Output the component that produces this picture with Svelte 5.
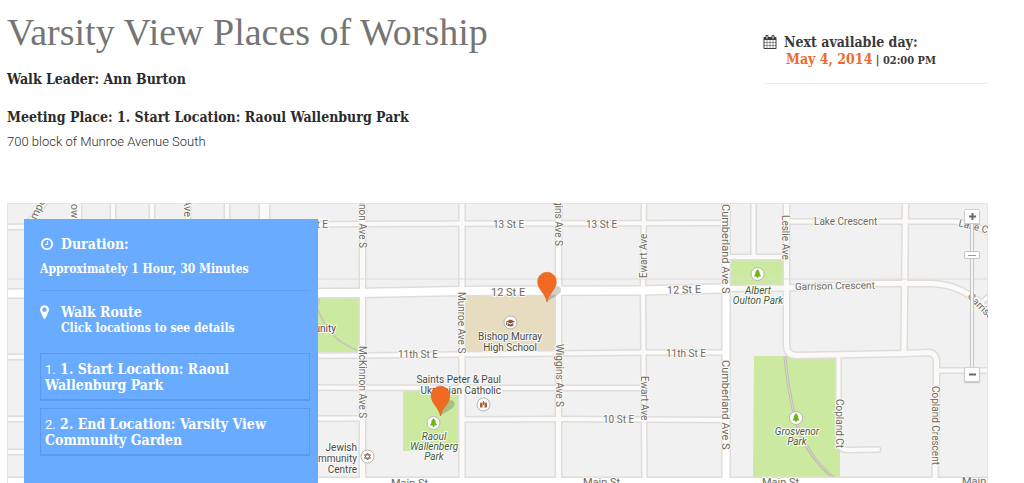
<script>
  let zoom = $state(80);
  let selected = $state(null);

  const stops = [
    '1. Start Location: Raoul Wallenburg Park',
    '2. End Location: Varsity View Community Garden'
  ];

  // [path, width]
  const roads = [
    ['M7 227L360 224L726 223', 4],
    ['M7 357L362 355.5L559 353.5L643 352.5L726 352.5', 4],
    ['M300 387.5L462 388H643', 4],
    ['M7 419L362 418.5', 4],
    ['M7 452H30', 4],
    ['M462 419.5L559 419L726 420', 4],
    ['M26 226L47 200', 4],
    ['M79 200V230', 4],
    ['M113 200V230', 4],
    ['M152 200V230', 4],
    ['M188 200V230', 4],
    ['M227 200V230', 4],
    ['M264.5 200V230', 9],
    ['M362.5 200V484', 5],
    ['M462 200V484', 5],
    ['M558.5 200V484', 5],
    ['M644 200L643 290L644.5 484', 4],
    ['M753.5 200V257', 4],
    ['M726 257H786', 4],
    ['M786 221.5H955Q974 223 992 235', 4],
    ['M726 288.5L786 288L876 283.5H930C952 284 970 291 992 314', 5],
    ['M981 303L992 293', 3],
    ['M905.5 200L904 353', 5],
    ['M786.5 200V345Q786.5 355.5 797 355.5L905 353.5L928 352.5Q936 352.5 936.5 362V378L935 484', 5],
    ['M937 370.5H990', 4],
    ['M838.5 356V440Q838.5 450 848 450L878 449.5', 4]
  ];

  const mainRoads = [
    ['M4 293.5L360 293L460 291L640 290.5L722 288.5', 8],
    ['M726 200V484', 7],
    ['M4 484H992', 12]
  ];

  // [text, x, y, rotation, anchor, size]
  const streets = [
    ['Temperance St', 31, 231, -64, 'start', 11],
    ['Lansdowne Ave', 71, 251, 90, 'end', 11],
    ['Clarence Ave', 184, 217, 90, 'end', 11],
    ['13 St E', 328, 228, 0, 'end', 10],
    ['McKinnon Ave S', 359, 248, 90, 'end', 10],
    ['McKinnon Ave S', 359, 346, 90, 'start', 10],
    ['Munroe Ave S', 458, 292, 90, 'start', 10],
    ['Wiggins Ave S', 555, 246, 90, 'end', 10],
    ['Wiggins Ave S', 556, 344, 90, 'start', 10],
    ['Ewart Ave', 647, 278, -90, 'start', 10],
    ['Ewart Ave', 641, 376, 90, 'start', 10],
    ['Cumberland Ave S', 722, 204, 90, 'start', 11],
    ['Cumberland Ave S', 722, 360, 90, 'start', 11],
    ['Leslie Ave', 782, 215, 90, 'start', 10],
    ['Copland Ct', 836, 399, 90, 'start', 10],
    ['Copland Crescent', 932, 386, 90, 'start', 10],
    ['13 St E', 493, 228, 0, 'start', 10],
    ['13 St E', 586, 228, 0, 'start', 10],
    ['12 St E', 491, 296, 0, 'start', 11],
    ['12 St E', 667, 294, -2, 'start', 11],
    ['11th St E', 398, 358, 0, 'start', 10],
    ['11th St E', 666, 357, 0, 'start', 10],
    ['10 St E', 603, 423, 0, 'start', 10],
    ['Main St', 391, 487, 0, 'start', 11],
    ['Main St', 583, 486, 0, 'start', 11],
    ['Main St', 762, 486, 0, 'start', 11],
    ['Main St', 962, 485, 0, 'start', 11],
    ['Lake Crescent', 814, 225, 0, 'start', 10],
    ['Lake Crescent', 958, 226, 14, 'start', 10],
    ['Garrison Crescent', 795, 290, -1, 'start', 10],
    ['Garrison Crescent', 967, 297, 45, 'start', 10]
  ];

  // [lines, x, first baseline, anchor, kind]
  const places = [
    [['Community'], 336, 332, 'end', 'poi'],
    [['Jewish', 'Community', 'Centre'], 357, 451, 'end', 'poi'],
    [['Saints Peter & Paul', 'Ukrainian Catholic'], 501, 383, 'end', 'poi'],
    [['Bishop Murray', 'High School'], 510, 340, 'middle', 'poi'],
    [['Raoul', 'Wallenberg', 'Park'], 434, 440, 'middle', 'park'],
    [['Albert', 'Oulton Park'], 758, 294, 'middle', 'park'],
    [['Grosvenor', 'Park'], 797, 435, 'middle', 'park']
  ];

  const trees = [[433.5, 423], [757.5, 274], [796, 418]];
  const pins = [[547, 302], [440.5, 416]];

  const clock = 'M1024 544v448q0 14-9 23t-23 9h-320q-14 0-23-9t-9-23v-64q0-14 9-23t23-9h224v-352q0-14 9-23t23-9h64q14 0 23 9t9 23zm416 352q0-148-73-273t-198-198-273-73-273 73-198 198-73 273 73 273 198 198 273 73 273-73 198-198 73-273zm224 0q0 209-103 385.5t-279.5 279.5-385.5 103-385.5-103-279.5-279.5-103-385.5 103-385.5 279.5-279.5 385.5-103 385.5 103 279.5 279.5 103 385.5z';
  const marker = 'M1152 640q0-106-75-181t-181-75-181 75-75 181 75 181 181 75 181-75 75-181zm256 0q0 109-33 179l-364 774q-16 33-47.5 52t-67.5 19-67.5-19-46.5-52l-365-774q-33-70-33-179 0-212 150-362t362-150 362 150 150 362z';
  const calendar = 'M192 1664h288v-288h-288v288zm352 0h320v-288h-320v288zm-352-352h288v-320h-288v320zm352 0h320v-320h-320v320zm-352-384h288v-288h-288v288zm736 736h320v-288h-320v288zm-384-736h320v-288h-320v288zm768 736h288v-288h-288v288zm-384-352h320v-320h-320v320zm-352-864v-288q0-13-9.5-22.5t-22.5-9.5h-64q-13 0-22.5 9.5t-9.5 22.5v288q0 13 9.5 22.5t22.5 9.5h64q13 0 22.5-9.5t9.5-22.5zm736 864h288v-320h-288v320zm-384-384h320v-288h-320v288zm384 0h288v-288h-288v288zm32-480v-288q0-13-9.5-22.5t-22.5-9.5h-64q-13 0-22.5 9.5t-9.5 22.5v288q0 13 9.5 22.5t22.5 9.5h64q13 0 22.5-9.5t9.5-22.5zm384-64v1280q0 52-38 90t-90 38h-1408q-52 0-90-38t-38-90v-1280q0-52 38-90t90-38h128v-96q0-66 47-113t113-47h64q66 0 113 47t47 113v96h384v-96q0-66 47-113t113-47h64q66 0 113 47t47 113v96h128q52 0 90 38t38 90z';
</script>

<main class="page">
  <header class="intro">
    <div class="summary">
      <h1>Varsity View Places of Worship</h1>
      <h2>Walk Leader: Ann Burton</h2>
      <h2>Meeting Place: 1. Start Location: Raoul Wallenburg Park</h2>
      <p>700 block of Munroe Avenue South</p>
    </div>
    <aside class="next-day">
      <svg class="icon" viewBox="0 0 1792 1792" aria-hidden="true"><path d={calendar} /></svg>
      <div>
        <h3>Next available day:</h3>
        <p class="when"><span class="date">May 4, 2014</span> | 02:00 PM</p>
      </div>
    </aside>
  </header>

  <section class="map" aria-label="Walk map">
    <svg class="canvas" viewBox="7 203 981 280" preserveAspectRatio="xMinYMin slice">
      <rect x="7" y="203" width="981" height="280" fill="#f1f1f1" />

      <rect x="300" y="297" width="60" height="55" fill="#cbea9f" />
      <path d="M320 297L317 308Q328 334 343 343T360 350" fill="none" stroke="#c8c8b8" stroke-width="2" />
      <rect x="403" y="391" width="55" height="60" fill="#cbea9f" />
      <rect x="730" y="260" width="54" height="26" fill="#cbea9f" />
      <path d="M754 356H840V477H753Z" fill="#cbea9f" />
      <path d="M785 356Q787 384 795 418Q805 455 835 479" fill="none" stroke="#bdbdb0" stroke-width="3" />
      <path d="M785 356Q787 384 795 418Q805 455 835 479" fill="none" stroke="#dcdcd2" stroke-width="1" />
      <rect x="464" y="295" width="92" height="56" fill="#e7dcbf" />

      <g fill="none" stroke="#dedddb">
        {#each [...roads, ...mainRoads] as [d, width]}
          <path {d} stroke-width={width + 3} stroke-linecap="round" />
        {/each}
      </g>
      <g fill="none" stroke="#fbfaf8">
        {#each roads as [d, width]}
          <path {d} stroke-width={width} stroke-linecap="round" />
        {/each}
      </g>
      <g fill="none" stroke="#ffffff">
        {#each mainRoads as [d, width]}
          <path {d} stroke-width={width} />
        {/each}
      </g>
      <path d="M7 279H988" stroke="#dcdbd7" stroke-width="1" />
      <path d="M7.5 483V203.5H987.5V483" fill="none" stroke="#e4e4e4" />

      <g class="street">
        {#each streets as [text, x, y, angle, anchor, size]}
          <text font-size={size} text-anchor={anchor} transform="translate({x} {y}) rotate({angle})">{text}</text>
        {/each}
      </g>

      {#each places as [lines, x, y, anchor, kind]}
        <text class={kind} text-anchor={anchor}>
          {#each lines as line, i}
            <tspan {x} y={y + i * (kind === 'poi' ? 11 : 10)}>{line}</tspan>
          {/each}
        </text>
      {/each}

      <g fill="#fff" stroke="#b5b5b5">
        {#each trees as [x, y]}
          <circle cx={x} cy={y} r="6.5" />
        {/each}
        <circle cx="510.5" cy="322.5" r="6.5" />
        <circle cx="483.5" cy="404.5" r="6.5" />
        <circle cx="367.5" cy="456.5" r="6.5" />
      </g>
      {#each trees as [x, y]}
        <path transform="translate({x} {y})" d="M0 -5L2.5 -1.5H1.7L3.5 2.5H0.8V4H-0.8V2.5H-3.5L-1.7 -1.5H-2.5Z" fill="#6fb510" />
      {/each}
      <path d="M506 321.5L510.5 319.5L515 321.5L510.5 323.5ZM507.5 323V325.5Q510.5 327.5 513.5 325.5V323L510.5 324.5ZM506.2 322V325H507V322Z" fill="#8a5a3c" />
      <path d="M480 407.5V403.5L481 402L482 403.5V407.5ZM482.4 407.5V402.5L483.5 400.5L484.6 402.5V407.5H484V405H483V407.5ZM485 407.5V403.5L486 402L487 403.5V407.5Z" fill="#a8613a" />
      <path d="M367.5 453L370.5 458.2H364.5ZM367.5 460L364.5 454.8H370.5Z" fill="none" stroke="#8a6a55" />

      {#each pins as [x, y]}
        <g transform="translate({x} {y})">
          <path d="M0 0C3 -6 2 -11 7 -15C11 -17 15 -15 14 -11C13 -7 6 -5 0 0Z" fill="#000" opacity="0.18" />
          <path d="M0 0C-1.5 -9 -9.3 -12 -9.3 -20.5A9.3 9.3 0 0 1 9.3 -20.5C9.3 -12 1.5 -9 0 0Z" fill="#f26a21" stroke="#d95a17" stroke-width="0.6" />
        </g>
      {/each}
    </svg>

    <div class="panel">
      <div class="row">
        <svg class="icon" viewBox="0 0 1792 1792" aria-hidden="true"><path d={clock} /></svg>
        <h3>Duration:</h3>
      </div>
      <p class="length">Approximately 1 Hour, 30 Minutes</p>
      <div class="row route">
        <svg class="icon marker" viewBox="384 0 1024 1792" aria-hidden="true"><path d={marker} /></svg>
        <div>
          <h3>Walk Route</h3>
          <p class="hint">Click locations to see details</p>
        </div>
      </div>
      <ol>
        {#each stops as stop, i}
          <li>
            <button class:active={selected === i} onclick={() => (selected = i)}>
              <span class="number">{i + 1}.</span> {stop}
            </button>
          </li>
        {/each}
      </ol>
    </div>

    <div class="zoom">
      <button aria-label="Zoom in" onclick={() => (zoom = Math.min(100, zoom + 5))}>
        <svg viewBox="0 0 9 9" aria-hidden="true"><path d="M1 4.5H8M4.5 1V8" /></svg>
      </button>
      <input type="range" min="0" max="100" bind:value={zoom} aria-label="Zoom level" />
      <button aria-label="Zoom out" onclick={() => (zoom = Math.max(0, zoom - 5))}>
        <svg viewBox="0 0 9 9" aria-hidden="true"><path d="M1 4.5H8" /></svg>
      </button>
    </div>
  </section>
</main>

<style>
  :global(body) {
    margin: 0;
    background: #fff;
  }

  .page {
    padding: 0 36px 0 7px;
    color: #2b2b2b;
    font-family: 'DejaVu Serif Condensed', 'DejaVu Serif', serif;
  }

  h1, h2, h3, p, ol {
    margin: 0;
    padding: 0;
  }

  .intro {
    display: flex;
    justify-content: space-between;
    align-items: flex-start;
    min-height: 203px;
  }

  h1 {
    padding-top: 8px;
    margin-bottom: 12px;
    font-family: 'Liberation Serif', serif;
    font-size: 38px;
    font-weight: 400;
    line-height: 48px;
    color: #757575;
  }

  h2 {
    margin-bottom: 16px;
    font-size: 14px;
    line-height: 22px;
  }

  .summary p {
    margin-top: -14px;
    font-family: Roboto, sans-serif;
    font-size: 13px;
    font-weight: 300;
    line-height: 24px;
  }

  .next-day {
    display: flex;
    gap: 7px;
    width: 225px;
    margin-top: 34px;
    padding-bottom: 14px;
    border-bottom: 1px solid #ececec;
    box-sizing: border-box;
    color: #3a3a3a;
  }

  .icon {
    flex: none;
    width: 14px;
    height: 16px;
    fill: currentColor;
  }

  h3 {
    font-size: 14px;
    line-height: 17px;
  }

  .when {
    padding-left: 2px;
    font-size: 11px;
    font-weight: 700;
    line-height: 17px;
  }

  .date {
    font-size: 14px;
    color: #f26a2b;
  }

  .map {
    position: relative;
    display: grid;
    height: 280px;
    overflow: hidden;
  }

  .canvas,
  .panel {
    grid-area: 1 / 1;
  }

  .canvas {
    width: 100%;
    height: 280px;
    font-family: Roboto, sans-serif;
  }

  .canvas text {
    paint-order: stroke;
    stroke: #fbfaf8;
    stroke-width: 2px;
    stroke-linejoin: round;
  }

  .street {
    fill: #6f6a5e;
  }

  .poi {
    font-size: 10px;
    fill: #4a4a45;
  }

  .park {
    font-size: 10px;
    font-style: italic;
    fill: #3f5f38;
  }

  .panel {
    position: relative;
    width: 294px;
    margin: 16px 0 0 17px;
    padding: 17px 8px 0 16px;
    box-sizing: border-box;
    background: #69abfe;
    color: #fff;
  }

  .row {
    display: flex;
    gap: 7px;
  }

  .length {
    padding: 8px 0 13px;
    border-bottom: 1px solid #629fee;
    font-size: 12px;
    font-weight: 700;
    line-height: 16px;
  }

  .route {
    margin: 13px 0 18px;
  }

  .icon.marker {
    width: 9px;
    margin-right: 5px;
  }

  .hint {
    font-size: 12px;
    font-weight: 700;
    line-height: 14px;
  }

  ol {
    list-style: none;
  }

  li {
    margin-bottom: 7px;
  }

  .panel button {
    display: block;
    width: 100%;
    padding: 7px 24px 6px 4px;
    border: 1px solid #5f9ae8;
    border-bottom-width: 2px;
    background: none;
    color: inherit;
    font: 700 14px/16px 'DejaVu Serif Condensed', 'DejaVu Serif', serif;
    text-align: left;
    cursor: pointer;
  }

  .panel button.active {
    background: #5f9ff0;
  }

  .number {
    font-family: Roboto, sans-serif;
    font-size: 13px;
    font-weight: 400;
    line-height: 1;
  }

  .zoom {
    position: absolute;
    top: 6px;
    right: 8px;
    display: flex;
    flex-direction: column;
    align-items: center;
    width: 16px;
  }

  .zoom button {
    display: grid;
    place-items: center;
    width: 16px;
    height: 15px;
    padding: 0;
    border: 1px solid #cfcfcf;
    border-radius: 2px;
    background: #fff;
    box-shadow: 0 1px 1px rgba(0, 0, 0, 0.2);
    cursor: pointer;
  }

  .zoom button svg {
    width: 9px;
    height: 9px;
    stroke: #6a6a6a;
    stroke-width: 2;
  }

  .zoom input {
    appearance: none;
    writing-mode: vertical-lr;
    direction: rtl;
    width: 16px;
    height: 143px;
    margin: 0;
    background: linear-gradient(90deg, transparent 6px, #c4c4c4 6px, #c4c4c4 7px, #f5f5f5 7px, #f5f5f5 9px, #c4c4c4 9px, #c4c4c4 10px, transparent 10px);
  }

  .zoom input::-webkit-slider-thumb {
    appearance: none;
    width: 16px;
    height: 8px;
    border: 1px solid #c4c4c4;
    border-radius: 2px;
    background: linear-gradient(#999, #999) center / 8px 1px no-repeat #fff;
  }
</style>
